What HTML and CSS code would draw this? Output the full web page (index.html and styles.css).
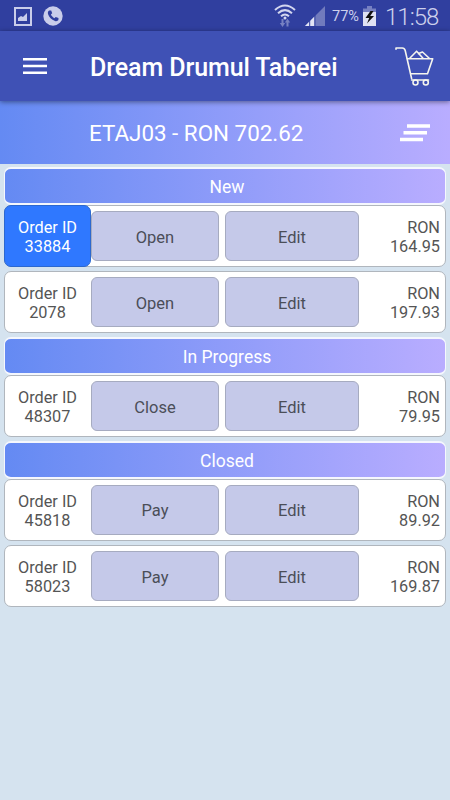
FILE: index.html
```html
<!DOCTYPE html>
<html lang="en">
<head>
    <meta charset="UTF-8">
    <meta name="viewport" content="width=device-width, initial-scale=1.0">
    <title>Dream Drumul Taberei</title>
    <link rel="stylesheet" href="styles.css">
</head>
<body>
    <div class="status-bar">
        <svg class="status-image" width="18" height="19" viewBox="0 0 18 19">
            <rect x="1" y="1" width="16" height="17" fill="none" stroke="#c9cdea" stroke-width="2"/>
            <path d="M4 14V11l3-2 2 1 4-4v8z" fill="#c9cdea"/>
        </svg>
        <svg class="status-call" width="20" height="20" viewBox="0 0 20 20">
            <circle cx="10" cy="10" r="9.7" fill="#c9cdea"/>
            <path d="M6.2 4.6 8.2 4.4 9.2 7.3 7.9 8.6C8.7 10.2 9.8 11.4 11.4 12.2L12.7 10.9 15.5 12 15.4 14C14.8 15 13.5 15.5 12 15 8.500 13.700 6 11 5 8 4.600 6.500 5.200 5.200 6.200 4.600Z" fill="#303f9f"/>
        </svg>
        <svg class="status-wifi" width="22" height="24" viewBox="0 0 22 24">
            <g fill="none" stroke="#d3d7ef" stroke-width="2">
                <path d="M1 7Q11-2 21 7"/>
                <path d="M4 10.300Q11 4 18 10.300"/>
                <path d="M7 13.300Q11 9.700 15 13.300"/>
            </g>
            <circle cx="11" cy="15" r="1.500" fill="#d3d7ef"/>
            <path d="M7.500 16h2v4h1.700L8.500 24 5.800 20h1.700zM12.500 23.500h2v-4h1.700l-2.700-3.800-2.700 3.800h1.700z" fill="#7781c2"/>
        </svg>
        <svg class="status-signal" width="20" height="20" viewBox="0 0 20 20">
            <path d="M0 20 20 0V20z" fill="#717bbd"/>
            <path d="M0 20 9.500 10.500V20z" fill="#e3e5f5"/>
            <path d="M4.700 14V20M9.900 9V20" stroke="#303f9f" stroke-width="1"/>
        </svg>
        <span class="battery-text">77%</span>
        <svg class="status-battery" width="13" height="20" viewBox="0 0 13 20">
            <path d="M4 0h5v2.500h4V6H0V2.500h4z" fill="#7781c2"/>
            <path d="M0 6h13v14H0z" fill="#dfe1f3"/>
            <path d="M7.500 5 2.500 12h3.700L4 17.500 11 10H7.200L10.500 5z" fill="#111"/>
        </svg>
        <span class="clock">11:58</span>
    </div>

    <div class="app-bar">
        <svg class="menu-icon" width="24" height="18" viewBox="0 0 24 18">
            <path d="M0 2.200H24M0 9H24M0 15.800H24" stroke="#fff" stroke-width="2.500"/>
        </svg>
        <h1 class="app-title">Dream Drumul Taberei</h1>
        <svg class="cart-icon" width="40" height="40" viewBox="0 0 40 40">
            <g fill="none" stroke="#f5f5ee" stroke-width="1.600" stroke-linecap="round" stroke-linejoin="round">
                <path d="M2 3.300V2H8.300Q10.500 2 11.200 4.500L17.600 32.500"/>
                <path d="M13.500 12.700H38.700L33.500 27.800H16.700M17.600 34H34.500"/>
                <path d="M16 12 22.600 5.200 28.800 12M24.500 7.600 28.500 6 35 12"/>
                <circle cx="21.500" cy="36.500" r="2.500"/>
                <circle cx="31.800" cy="36.500" r="2.500"/>
            </g>
        </svg>
    </div>

    <div class="table-bar">
        <span class="table-total">ETAJ03 - RON 702.62</span>
        <svg class="clear-icon" width="30" height="18" viewBox="0 0 30 18">
            <path d="M7 2H30M3.500 8.800H27M0 15.500H23" stroke="#fff" stroke-width="3.500"/>
        </svg>
    </div>

    <div class="orders">
        <div class="section-title">New</div>
        <div class="order">
            <div class="order-id selected">Order ID<br>33884</div>
            <button class="btn btn-main">Open</button>
            <button class="btn btn-edit">Edit</button>
            <div class="price">RON<br>164.95</div>
        </div>
        <div class="order">
            <div class="order-id">Order ID<br>2078</div>
            <button class="btn btn-main">Open</button>
            <button class="btn btn-edit">Edit</button>
            <div class="price">RON<br>197.93</div>
        </div>

        <div class="section-title">In Progress</div>
        <div class="order">
            <div class="order-id">Order ID<br>48307</div>
            <button class="btn btn-main">Close</button>
            <button class="btn btn-edit">Edit</button>
            <div class="price">RON<br>79.95</div>
        </div>

        <div class="section-title">Closed</div>
        <div class="order">
            <div class="order-id">Order ID<br>45818</div>
            <button class="btn btn-main">Pay</button>
            <button class="btn btn-edit">Edit</button>
            <div class="price">RON<br>89.92</div>
        </div>
        <div class="order">
            <div class="order-id">Order ID<br>58023</div>
            <button class="btn btn-main">Pay</button>
            <button class="btn btn-edit">Edit</button>
            <div class="price">RON<br>169.87</div>
        </div>
    </div>
</body>
</html>
```

FILE: styles.css
```css
* {
    box-sizing: border-box;
}
body {
    margin: 0;
    min-height: 100vh;
    background: #d5e3ef;
    font-family: Roboto, "Liberation Sans", sans-serif;
    color: #555;
}
svg {
    display: block;
    flex: none;
}
.status-bar {
    display: flex;
    align-items: flex-start;
    height: 31px;
    padding: 0 11px 0 14px;
    background: #303f9f;
    color: #ccd0ec;
}
.status-image {
    margin-top: 7px;
}
.status-call {
    margin: 6px 0 0 11px;
}
.status-wifi {
    margin: 3px 0 0 auto;
}
.status-signal {
    margin: 6px 0 0 9px;
}
.battery-text {
    width: 31px;
    margin: 8px 0 0 7px;
    font-size: 14.5px;
    line-height: 18px;
}
.status-battery {
    margin-top: 6px;
}
.clock {
    width: 54px;
    margin: 3px 0 0 9px;
    font-size: 24px;
    font-weight: 300;
    letter-spacing: -1px;
    line-height: 29px;
    white-space: nowrap;
}
.app-bar {
    position: relative;
    display: flex;
    align-items: center;
    height: 70px;
    padding: 0 16px 0 23px;
    background: #3f51b5;
    box-shadow: 0 1px 5px rgba(0, 0, 0, 0.45);
    color: #fff;
}
.app-title {
    margin: 3px auto 0 43px;
    font-size: 25px;
    font-weight: 500;
    letter-spacing: -0.1px;
    line-height: 30px;
    white-space: nowrap;
}
.table-bar {
    display: flex;
    align-items: center;
    height: 62.5px;
    padding: 0 20px 0 89px;
    background: linear-gradient(to right, #648af3, #b9adff);
    color: #fff;
}
.table-total {
    margin: 2px auto 0 0;
    font-size: 22.4px;
    line-height: 28px;
    white-space: nowrap;
}
.clear-icon {
    margin-top: 1px;
}
.orders {
    padding: 3.9px 4px 0;
}
.section-title {
    height: 37.6px;
    border: solid #f5f7fd;
    border-width: 2px 1px;
    border-radius: 7px;
    background: linear-gradient(to right, #648af3, #b9adff);
    color: #fff;
    font-size: 17.5px;
    line-height: 36px;
    text-align: center;
    padding-left: 4px;
}
.order {
    display: flex;
    align-items: center;
    height: 62.2px;
    margin-bottom: 4px;
    border: 1px solid #b0b6bd;
    border-radius: 7px;
    background: #fff;
    font-size: 16.3px;
    line-height: 19.3px;
}
.order-id {
    display: flex;
    align-items: center;
    justify-content: center;
    width: 87px;
    height: 62px;
    margin-left: -1px;
    padding-top: 2px;
    border-radius: 7px;
    text-align: center;
}
.order-id.selected {
    border: 1px solid #2c68cf;
    background: #2f78ff;
    color: #fff;
}
.btn {
    height: 50px;
    margin: 0;
    padding: 2px 0 0;
    border: 1px solid #a6abc0;
    border-radius: 6px;
    background: #c5c9e9;
    color: #4b4e58;
    font-family: inherit;
    font-size: 16.5px;
}
.btn-main {
    width: 128px;
}
.btn-edit {
    width: 134px;
    margin-left: 6px;
}
.price {
    flex: 1;
    padding: 2px 5px 0 0;
    text-align: right;
}
```
